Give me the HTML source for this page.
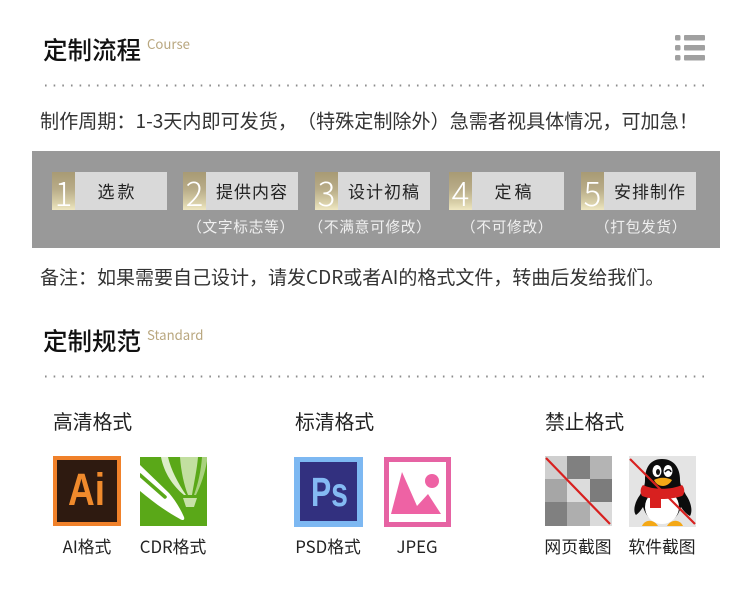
<!DOCTYPE html>
<html lang="zh"><head><meta charset="utf-8">
<style>
html,body{margin:0;padding:0;background:#fff}
body{position:relative;width:750px;height:600px;overflow:hidden;font-family:"Noto Sans CJK SC",sans-serif;color:#222;text-spacing-trim:space-all}
.t{position:absolute;white-space:nowrap;line-height:1;font-family:"Noto Sans CJK SC",sans-serif}
.h{font-size:24.5px;font-weight:500;color:#111}
.en{font-size:13.2px;color:#b9a77f;font-weight:400}
.p{font-size:19px;color:#333;font-weight:400}
.band{position:absolute;left:32px;top:151px;width:688px;height:97px;background:#999}
.step{position:absolute;top:172px;width:115px;height:38px;background:#d9d9d9}
.num{position:absolute;left:0;top:0;width:23px;height:38px;background:linear-gradient(180deg,#a89a74 0%,#b8ac88 45%,#d8cfa8 80%,#efe7c2 100%);color:#fff;font-size:33px;line-height:40px;text-align:center;font-weight:200;font-family:"Noto Sans CJK SC",sans-serif}
.lab{position:absolute;left:23px;right:0;top:0;text-align:center;line-height:38px;font-size:17px;color:#222;letter-spacing:1px;font-family:"Noto Sans CJK SC",sans-serif}
.sub{position:absolute;top:218px;width:140px;text-align:center;font-size:14.7px;line-height:18px;color:#f0f0f0;letter-spacing:.7px;font-family:"Noto Sans CJK SC",sans-serif}
.st{font-size:19.8px;color:#222}
.c{position:absolute;text-align:center;white-space:nowrap;font-size:16.8px;line-height:20px;top:536px;color:#222;font-family:"Noto Sans CJK SC",sans-serif}
svg{position:absolute;display:block}
</style></head><body>

<div class="t h" style="left:43px;top:38px">定制流程</div>
<div class="t en" style="left:147px;top:37px">Course</div>
<svg style="left:675px;top:35px" width="30" height="26" viewBox="0 0 30 26"><g fill="#a0a0a0"><rect x="0" y="0" width="5.5" height="5.5" rx="1.5"/><rect x="9" y="0" width="21" height="5.5" rx="1"/><rect x="0" y="10" width="5.5" height="5.5" rx="1.5"/><rect x="9" y="10" width="21" height="5.5" rx="1"/><rect x="0" y="20" width="5.5" height="5.5" rx="1.5"/><rect x="9" y="20" width="21" height="5.5" rx="1"/></g></svg>
<svg style="left:44px;top:84px" width="664" height="3"><line x1="1" y1="1.5" x2="663" y2="1.5" stroke="#8c8c8c" stroke-width="2" stroke-dasharray="1.6 7.05"/></svg>

<div class="t p" style="left:40px;top:111px;font-size:19.1px">制作周期：1-3天内即可发货，（特殊定制除外）急需者视具体情况，可加急！</div>

<div class="band"></div>
<div class="step" style="left:52px"><div class="num">1</div><div class="lab" style="letter-spacing:3px;left:16px">选款</div></div>
<div class="step" style="left:183px"><div class="num">2</div><div class="lab">提供内容</div></div>
<div class="step" style="left:315px"><div class="num">3</div><div class="lab">设计初稿</div></div>
<div class="step" style="left:449px"><div class="num">4</div><div class="lab" style="letter-spacing:3px;left:16px">定稿</div></div>
<div class="step" style="left:581px"><div class="num">5</div><div class="lab">安排制作</div></div>
<div class="sub" style="left:171px">（文字标志等）</div>
<div class="sub" style="left:300px">（不满意可修改）</div>
<div class="sub" style="left:437px">（不可修改）</div>
<div class="sub" style="left:571px">（打包发货）</div>

<div class="t p" style="left:40px;top:267px">备注：如果需要自己设计，请发CDR或者AI的格式文件，转曲后发给我们。</div>

<div class="t h" style="left:43px;top:329px">定制规范</div>
<div class="t en" style="left:147px;top:328px">Standard</div>
<svg style="left:44px;top:375px" width="664" height="3"><line x1="1" y1="1.5" x2="663" y2="1.5" stroke="#8c8c8c" stroke-width="2" stroke-dasharray="1.6 7.05"/></svg>

<div class="t st" style="left:53px;top:411px">高清格式</div>
<div class="t st" style="left:295px;top:411px">标清格式</div>
<div class="t st" style="left:545px;top:411px">禁止格式</div>

<!-- Ai -->
<svg style="left:53px;top:456px" width="68" height="70" viewBox="0 0 68 70"><rect width="68" height="70" fill="#f0812a"/><rect x="4" y="4" width="60" height="62" fill="#2e1a10"/><text x="15" y="49" font-family="Liberation Sans" font-weight="bold" font-size="45" textLength="37" lengthAdjust="spacingAndGlyphs" fill="#f08a2c">Ai</text></svg>
<!-- CDR -->
<svg style="left:140px;top:457px" width="67" height="69" viewBox="0 0 67 69"><rect width="67" height="69" fill="#5aa818"/><path d="M21 0C24 16 33 29 44 38L46 38C38 26 31 13 28 0Z" fill="#dcedc8"/><path d="M40 0C41 14 44 28 48 38L52 38C54 26 57 12 58 0Z" fill="#c2dfa0"/><path d="M62 0C61 14 58 27 54 38L56 38C61 28 65 16 67 4V0Z" fill="#a9d27e"/><path d="M43 41H57L54 50H46Z" fill="#c8e2a8"/><path d="M0 8L29 36C35 43 40 51 44 60C45 63 43 64 40 62C27 55 13 45 0 34Z" fill="#fff"/><path d="M0 18L25 40" stroke="#5aa818" stroke-width="3.500" stroke-linecap="round" fill="none"/></svg>
<!-- PS -->
<svg style="left:294px;top:457px" width="69" height="70" viewBox="0 0 69 70"><rect width="69" height="70" fill="#7db8f2"/><rect x="6" y="5" width="57" height="59" fill="#32307f"/><text x="17" y="49" font-family="Liberation Sans" font-weight="bold" font-size="41" textLength="37" lengthAdjust="spacingAndGlyphs" fill="#84baf3">Ps</text></svg>
<!-- JPEG -->
<svg style="left:384px;top:457px" width="67" height="70" viewBox="0 0 67 70"><rect width="67" height="70" fill="#e663a3"/><rect x="5" y="5" width="57" height="60" fill="#fff"/><path d="M7 57L18 15L33 49L44 37L57 57Z" fill="#ee62a4"/><circle cx="48" cy="24" r="7" fill="#ee62a4"/></svg>
<!-- web -->
<svg style="left:545px;top:456px" width="67" height="70" viewBox="0 0 67 70"><rect width="67" height="70" fill="#c8c8c8"/><rect x="0" y="0" width="22" height="23" fill="#cfcfcf"/><rect x="22" y="0" width="23" height="23" fill="#808080"/><rect x="45" y="0" width="22" height="23" fill="#b4b4b4"/><rect x="0" y="23" width="22" height="23" fill="#a6a6a6"/><rect x="22" y="23" width="23" height="23" fill="#dcdcdc"/><rect x="45" y="23" width="22" height="23" fill="#7c7c7c"/><rect x="0" y="46" width="22" height="24" fill="#808080"/><rect x="22" y="46" width="23" height="24" fill="#aeaeae"/><rect x="45" y="46" width="22" height="24" fill="#dadada"/><line x1="1" y1="2" x2="65" y2="68" stroke="#d8201f" stroke-width="2.2"/></svg>
<!-- QQ -->
<svg style="left:629px;top:456px" width="67" height="71" viewBox="0 0 67 71"><rect width="67" height="71" fill="#e4e4e4"/>
<path d="M33 3C21 3 16 12 16 24C16 30 14 33 11 39C5 47 4 56 7 59C10 57 12 54 14 51C17 60 22 66 33 66C45 66 49 60 52 51C54 54 57 58 61 60C64 55 62 46 57 39C54 33 51 30 51 24C51 12 45 3 33 3Z" fill="#0c0c0c"/>
<ellipse cx="33" cy="51" rx="17" ry="17" fill="#fff"/>
<ellipse cx="28" cy="15" rx="4.500" ry="6" fill="#fff"/><ellipse cx="39" cy="15" rx="4.500" ry="6" fill="#fff"/><ellipse cx="29" cy="16" rx="2" ry="3" fill="#111"/><path d="M36 16C38 13 41 13 42 16" stroke="#111" stroke-width="1.600" fill="none"/>
<path d="M25 24C30 21 38 21 43 24C41 28 37 30 34 30C30 30 27 28 25 24Z" fill="#f4a816"/>
<path d="M14 29C24 34 42 34 53 29C56 32 56 38 53 40C46 42 40 43 32 43V52H21V42C19 42 16 41 13 40C11 37 11 32 14 29Z" fill="#d8201f"/>
<path d="M13 70C16 63 25 63 29 70Z M38 70C42 63 51 63 54 70Z" fill="#f4a816"/>
<line x1="1" y1="3" x2="66" y2="68" stroke="#d8201f" stroke-width="2.2"/></svg>

<div class="c" style="left:53px;width:68px">AI格式</div>
<div class="c" style="left:133px;width:80px">CDR格式</div>
<div class="c" style="left:288px;width:80px">PSD格式</div>
<div class="c" style="left:377px;width:80px">JPEG</div>
<div class="c" style="left:538px;width:80px">网页截图</div>
<div class="c" style="left:622px;width:80px">软件截图</div>
</body></html>
